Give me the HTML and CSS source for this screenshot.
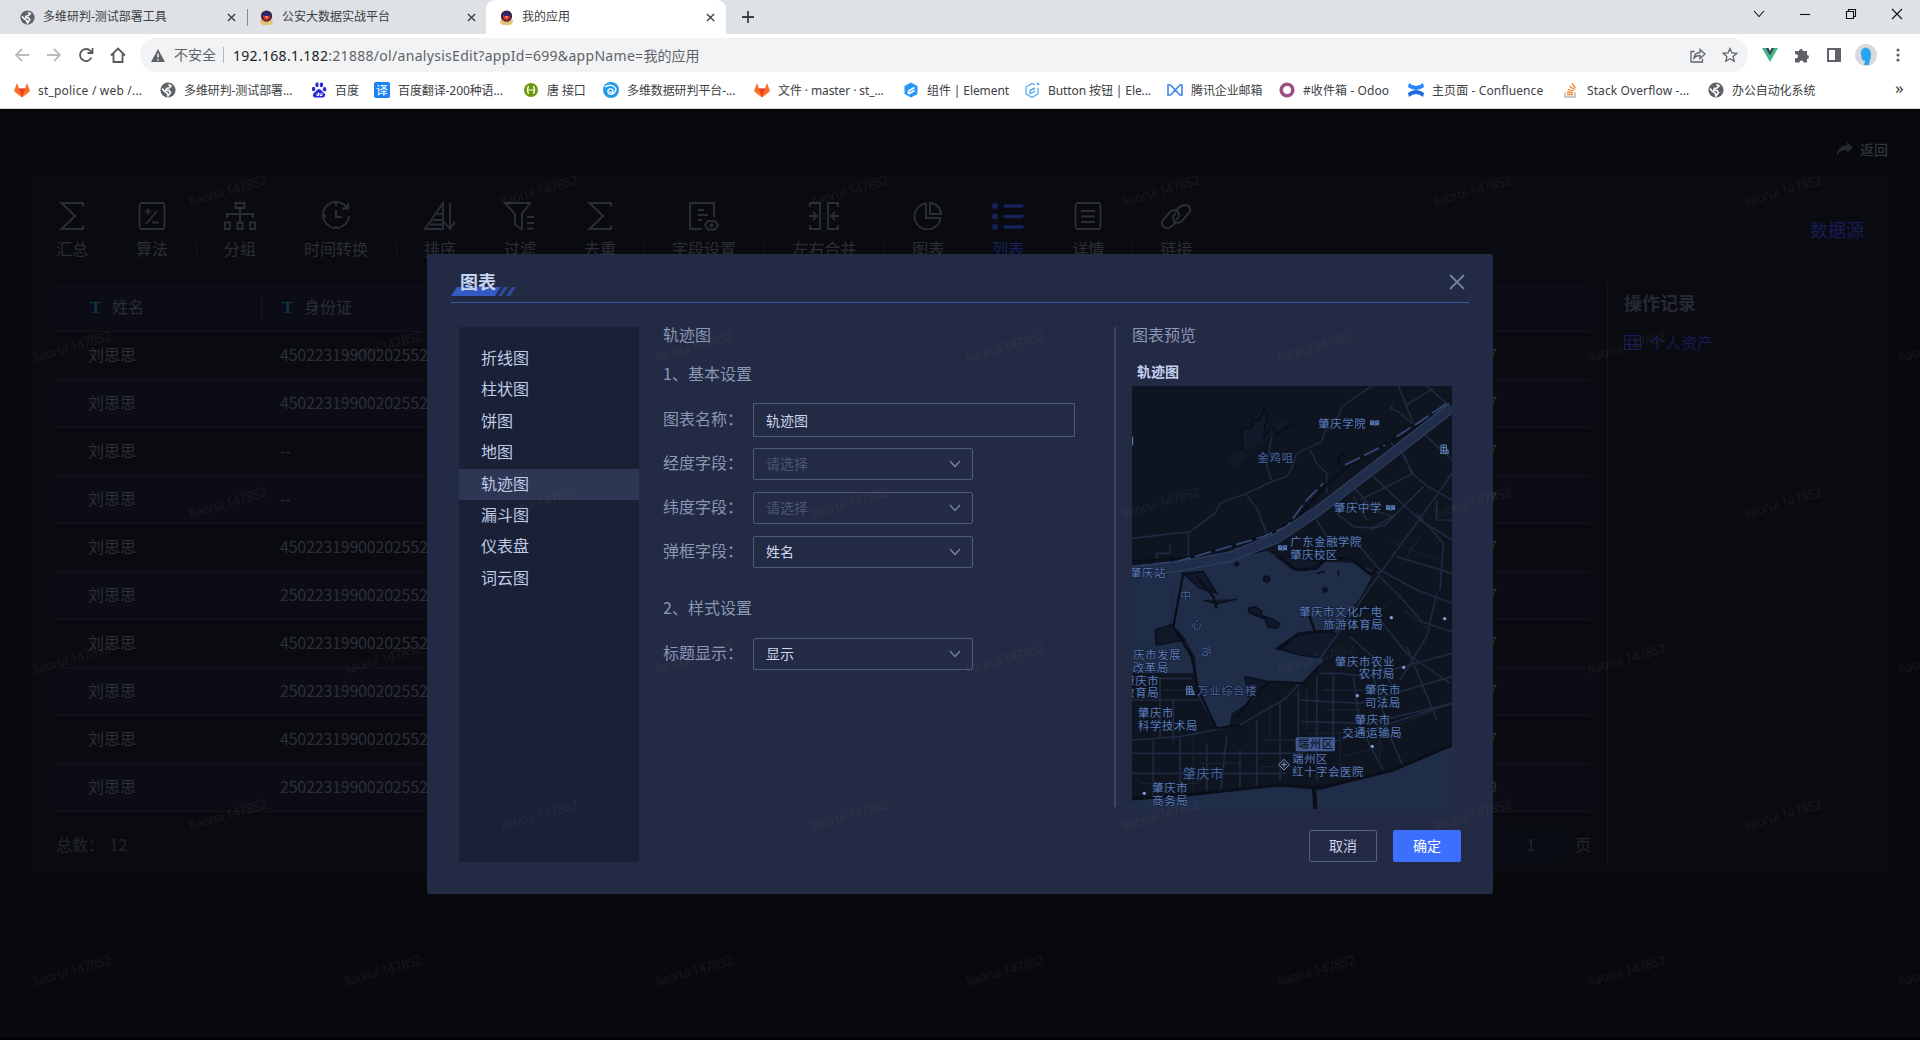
FILE: index.html
```html
<!DOCTYPE html>
<html lang="zh-CN">
<head>
<meta charset="utf-8">
<title>我的应用</title>
<link rel="stylesheet" href="styles.css">
</head>
<body>
<svg class="defs" width="0" height="0">
  <symbol id="globe" viewBox="0 0 16 16"><circle cx="8" cy="8" r="7.6" fill="#5f6368"/><path d="M8.500 2.500 11 4 9 6 6.500 6.500 6 8l3 .5 1.500 2L8 13.800 7 11 4 9 2.200 6.500" fill="none" stroke="#fff" stroke-width="1.600"/></symbol>
  <symbol id="police" viewBox="0 0 16 16"><path d="M2 9h12l1 4-3 3H4l-3-3z" fill="#e6bf77"/><circle cx="8" cy="6.500" r="6" fill="#3a2340"/><path d="M4 5.500h8L11 9.500l-3 2-3-2z" fill="#e02b32"/><path d="M5 4.500 8 2l3 2.500v2H5z" fill="#1f2d86"/><circle cx="8" cy="7.500" r="1.200" fill="#f3c95c"/></symbol>
  <symbol id="x" viewBox="0 0 10 10"><path d="M1 1l8 8M9 1 1 9" fill="none" stroke="currentColor" stroke-width="1.500"/></symbol>
  <symbol id="gitlab" viewBox="0 0 16 16"><path d="M0 9 3 1l2 5.500h6L13 1l3 8-8 6.500z" fill="#fc6d26"/><path d="M5 6.500h6L8 15.500z" fill="#e24329"/><path d="M0 9 8 15.500 3 12zM16 9 8 15.500 13 12z" fill="#fca326"/></symbol>
  <symbol id="caret" viewBox="0 0 12 8"><path d="M1 1l5 5.500L11 1" fill="none" stroke="currentColor" stroke-width="1.200"/></symbol>
  <symbol id="sum" viewBox="0 0 28 28"><path d="M25 4.500V1H3.500L17 14 3.500 27H25v-3.500"/></symbol>
  <symbol id="book" viewBox="0 0 28 20"><path d="M0 1h11l3 3 3-3h11v15H18l-4 3-4-3H0z" fill="#5575b0"/><path d="M14 5v13M7 3v5M21 3v5" stroke="#111b30" stroke-width="2"/></symbol>
  <symbol id="bldg" viewBox="0 0 28 30"><path d="M3 28V3h16v25M19 17h5v11M0 28h28M3 11h16M3 20h16M11 3v25" fill="none" stroke="#6384bd" stroke-width="3"/></symbol>
</svg>

<header class="browser">
  <div class="tabs">
    <div class="tab"><svg class="fav"><use href="#globe"/></svg><span>多维研判-测试部署工具</span><svg class="tab-x"><use href="#x"/></svg></div>
    <div class="tab ruled"><svg class="fav"><use href="#police"/></svg><span>公安大数据实战平台</span><svg class="tab-x"><use href="#x"/></svg></div>
    <div class="tab active"><svg class="fav"><use href="#police"/></svg><span>我的应用</span><svg class="tab-x"><use href="#x"/></svg></div>
    <svg class="plus" viewBox="0 0 12 12"><path d="M6 0v12M0 6h12" stroke="#3c4043" stroke-width="1.800"/></svg>
    <div class="win">
      <svg viewBox="0 0 12 12"><path d="M1 3l5 5.500L11 3"/></svg>
      <svg viewBox="0 0 12 12"><path d="M1 6.500h10"/></svg>
      <svg viewBox="0 0 12 12"><path d="M1.500 3.500h7v7h-7zM3.500 3.500v-2h7v7h-2"/></svg>
      <svg viewBox="0 0 12 12"><path d="M1 1l10 10M11 1 1 11"/></svg>
    </div>
  </div>
  <div class="nav">
    <div class="nav-icons">
      <svg viewBox="0 0 16 16" class="off"><path d="M15 8H2M8 2 2 8l6 6"/></svg>
      <svg viewBox="0 0 16 16" class="off"><path d="M1 8h13M8 2l6 6-6 6"/></svg>
      <svg viewBox="0 0 16 16"><path d="M13.500 10.500A6 6 0 1 1 12.500 4L14 5.500M14.500 1v5h-5"/></svg>
      <svg viewBox="0 0 16 16"><path d="M1 8.500 8 1.500l7 7M3.500 7v8h9V7"/></svg>
    </div>
    <div class="address">
      <svg class="warn" viewBox="0 0 14 13"><path d="M7 0l7 13H0z" fill="#5f6368"/><path d="M7 4.500v4M7 10v1.500" stroke="#fff" stroke-width="1.400"/></svg>
      <span class="unsafe">不安全</span>
      <span class="url"><b>192.168.1.182</b>:21888/ol/analysisEdit?appId=699&amp;appName=<i>我的应用</i></span>
      <svg class="share" viewBox="0 0 16 16"><path d="M4.500 4.500H1V15h11.500v-3M4 11c.5-4 3-5.500 6-5.500V2.500l5 4.500-5 4.500V8.500C7 8.500 5.500 9 4 11z"/></svg>
      <svg class="star" viewBox="0 0 16 16"><path d="M8 1.500 10 6l4.700.4-3.600 3.100 1.100 4.700L8 11.700l-4.200 2.500 1.100-4.700L1.300 6.400 6 6z"/></svg>
    </div>
    <div class="exts">
      <svg viewBox="0 0 16 16"><path d="M0 1h3.500L8 9l4.500-8H16L8 15z" fill="#41b883"/><path d="M3.500 1H6.500L8 4l1.500-3h3L8 9z" fill="#34495e"/></svg>
      <svg viewBox="0 0 16 16"><path d="M1 4h4a2 2 0 1 1 4 0h4v4a2 2 0 1 1 0 4v3.500H9.500a2 2 0 1 0-4 0H1V11a2 2 0 1 0 0-3.500z" fill="#5f6368"/></svg>
      <svg viewBox="0 0 16 16"><path d="M2 2h12v12H2z" fill="none" stroke="#5f6368" stroke-width="2"/><path d="M9 2h5v12H9z" fill="#5f6368"/></svg>
      <svg class="avatar" viewBox="0 0 22 22"><circle cx="11" cy="11" r="11" fill="#d8dadd"/><path d="M6 10C5 1 17 2 16 11c0 4-2 6-2 10H9l1-4-3-1z" fill="#29a6f0"/></svg>
      <svg viewBox="0 0 16 16"><g fill="#5f6368"><circle cx="8" cy="3" r="1.600"/><circle cx="8" cy="8" r="1.600"/><circle cx="8" cy="13" r="1.600"/></g></svg>
    </div>
  </div>
  <nav class="marks">
    <a class="wide"><svg><use href="#gitlab"/></svg>st_police / web /...</a>
    <a><svg><use href="#globe"/></svg>多维研判-测试部署...</a>
    <a><svg viewBox="0 0 16 16"><g fill="#2529d8"><ellipse cx="2.600" cy="7" rx="1.700" ry="2.200"/><ellipse cx="6" cy="2.800" rx="1.700" ry="2.500"/><ellipse cx="10.500" cy="2.800" rx="1.700" ry="2.500"/><ellipse cx="13.600" cy="7.200" rx="1.700" ry="2.200"/><path d="M8 7c2 0 3 2.500 5 4s1 4.500-1 4.500H4c-2 0-3-3-1-4.500S6 7 8 7z"/></g><path d="M6 11.500v2h1.500v-3M9 11v2.500h2V11" stroke="#fff" fill="none"/></svg>百度</a>
    <a><svg viewBox="0 0 16 16"><rect width="16" height="16" rx="2" fill="#1b82f2"/><text x="8" y="12.500" class="yi">译</text></svg>百度翻译-200种语...</a>
    <a><svg viewBox="0 0 16 16"><circle cx="8" cy="8" r="7" fill="#6a9a0b"/><path d="M5.500 4q-2 4 0 8M10.500 4q2 4 0 8M5 8h6" stroke="#fff" fill="none" stroke-width="1.200"/></svg>唐 接口</a>
    <a><svg viewBox="0 0 16 16"><circle cx="8" cy="8" r="8" fill="#1e9bea"/><path d="M2 5c4-3 9-2 11 2-1 6-7 7-8 3s5-4 5-1-3 2-3 0" stroke="#fff" fill="none" stroke-width="1.400"/></svg>多维数据研判平台-...</a>
    <a><svg><use href="#gitlab"/></svg>文件 · master · st_...</a>
    <a><svg viewBox="0 0 16 16"><path d="M8 .5 14.500 4v8L8 15.500 1.500 12V4z" fill="#2a96f5"/><path d="M11.500 5.500 5.500 9M11.500 8.500l-6 3.500M5.500 9v3" stroke="#fff" stroke-width="1.600" fill="none"/></svg>组件 | Element</a>
    <a><svg viewBox="0 0 16 16"><path d="M11 3 8 1.500 2 5v7l6 3.500 6-3.500V6" fill="none" stroke="#4ca3ef" stroke-width="1.200"/><path d="M11 6 6 8.500M11 9l-5 3M6 8.500V12" stroke="#4ca3ef" stroke-width="1.400" fill="none"/><circle cx="14" cy="2" r="1.300" fill="#4ca3ef"/></svg>Button 按钮 | Ele...</a>
    <a><svg viewBox="0 0 16 16"><path d="M1 3v10h2.500L13 3h2v10h-2L3.500 3z" fill="none" stroke="#3a87e5" stroke-width="1.600"/></svg>腾讯企业邮箱</a>
    <a><svg viewBox="0 0 16 16"><circle cx="8" cy="8" r="5.800" fill="none" stroke="#9b4f86" stroke-width="3.600"/></svg><span class="odoo">#收件箱 - Odoo</span></a>
    <a><svg viewBox="0 0 16 16"><path d="M1 1q7 6 14 0l1 4q-8 6-16 0z" fill="#2684ff"/><path d="M1 15q7-6 14 0l1-4q-8-6-16 0z" fill="#1868db"/></svg><span class="odoo">主页面 - Confluence</span></a>
    <a><svg viewBox="0 0 16 16"><path d="M2 10v5h10v-5" fill="none" stroke="#bcbbbb" stroke-width="1.500"/><path d="M4 12.500h6M4 10l6 .7M4.800 7.300 10.500 9M6.500 4.300l5 3.400M9 1.500l3.500 4.800" stroke="#f48024" stroke-width="1.300"/></svg><span class="odoo">Stack Overflow -...</span></a>
    <a><svg><use href="#globe"/></svg>办公自动化系统</a>
    <a class="more">»</a>
  </nav>
</header>

<main class="app">
  <div class="back"><svg viewBox="0 0 16 14"><path d="M10 0l6 5.500L10 11V8C5 8 2 9.500 0 14 0 7 4 3.500 10 3.200z" fill="currentColor"/></svg><span>返回</span></div>
  <section class="panel">
    <div class="tools">
      <div class="tool"><svg viewBox="0 0 28 28"><use href="#sum"/></svg>汇总</div>
      <div class="tool"><svg viewBox="0 0 28 28"><rect x="1.500" y="1" width="25" height="26" rx="2.500"/><path d="M7 9.500h6M10 6.500v6M19 9 8 22M14 20.500h7"/></svg>算法</div>
      <i class="rule"></i>
      <div class="tool"><svg class="w32" viewBox="-2 0 32 28"><path d="M9.500 1h9v5h-9zM14 6v6M1 16v-4h26v4M14 12v8M-1 20.500h5V27h-5zM11.500 20.500h5V27h-5zM24 20.500h5V27h-5z"/></svg>分组</div>
      <div class="tool"><svg viewBox="0 0 28 28"><path d="M25 6A13 13 0 1 0 27 14M20 6.500h6V1M14 8v7h6M14 1v3M14 24v3M1 14h3"/></svg>时间转换</div>
      <i class="rule"></i>
      <div class="tool"><svg class="w32" viewBox="-2 0 32 28"><path d="M17 27V1L-1 27zM11 12h6M7 18h10M4 22.500h13M24 1v26M18 20l6 7 5-7"/></svg>排序</div>
      <div class="tool"><svg class="w32" viewBox="-2 0 32 28"><path d="M-1 1h25l-8 11v15l-7-4V12zM21 15h7M21 21h7M21 26.500h7"/></svg>过滤</div>
      <div class="tool"><svg viewBox="0 0 28 28"><use href="#sum"/></svg>去重</div>
      <i class="rule"></i>
      <div class="tool"><svg class="w32" viewBox="-2 0 32 28"><path d="M24 15V1H0v26h12M8 8h6M8 13h10M8 18h4M18 19h7l3 4-3 4.500h-7L15 23z"/><circle cx="21.500" cy="23.300" r="1"/></svg>字段设置</div>
      <i class="rule"></i>
      <div class="tool"><svg class="w32" viewBox="-2 0 32 28"><path d="M0 5V1h10v26H0v-4M28 5V1H18v26h10v-4M-1 14h7M3 10l4 4-4 4M29 14h-7M25 10l-4 4 4 4"/></svg>左右合并</div>
      <i class="rule"></i>
      <div class="tool"><svg viewBox="0 0 28 28"><path d="M12 1.500A13 13 0 1 0 26.500 16H12zM16 1v11h11A11 11 0 0 0 16 1z"/></svg>图表</div>
      <div class="tool on"><svg class="w32" viewBox="-2 0 32 28"><path d="M11 4h17M11 14.500h17M11 25h17" stroke-width="3.400" stroke-linecap="round"/><g fill="currentColor" stroke="none"><circle cx="1" cy="4" r="3"/><circle cx="1" cy="14.500" r="3"/><circle cx="1" cy="25" r="3"/></g></svg>列表</div>
      <div class="tool"><svg viewBox="0 0 28 28"><rect x="1.500" y="1" width="25" height="26" rx="2.500"/><path d="M7 9h14M7 14.500h14M7 20h14"/></svg>详情</div>
      <i class="rule"></i>
      <div class="tool"><svg class="w32" viewBox="-2 0 32 28"><path d="M14 20c-3 3-5 6-9 6s-7-4-4-8l7-8c3-3 9-2 9 3 0 3-2 4-3 5M14 8c3-3 5-5 9-5s7 4 4 8l-7 8c-3 3-9 2-9-3 0-3 2-4 3-5"/></svg>链接</div>
      <div class="source">数据源</div>
    </div>
    <div class="content">
      <div class="left">
        <div class="table">
          <div class="row head"><div class="c1"><b>T</b>姓名</div><div class="c2"><b>T</b>身份证</div></div>
          <div class="row"><div class="c1">刘思思</div><div class="c2">450223199002025527</div><div class="c3">1990-02-07</div></div>
          <div class="row alt"><div class="c1">刘思思</div><div class="c2">450223199002025527</div><div class="c3">1990-02-07</div></div>
          <div class="row"><div class="c1">刘思思</div><div class="c2">--</div><div class="c3">1990-02-07</div></div>
          <div class="row alt"><div class="c1">刘思思</div><div class="c2">--</div><div class="c3">1990-02-07</div></div>
          <div class="row"><div class="c1">刘思思</div><div class="c2">450223199002025527</div><div class="c3">1990-02-07</div></div>
          <div class="row alt"><div class="c1">刘思思</div><div class="c2">250223199002025527</div><div class="c3">1990-02-07</div></div>
          <div class="row"><div class="c1">刘思思</div><div class="c2">450223199002025527</div><div class="c3">1990-02-07</div></div>
          <div class="row alt"><div class="c1">刘思思</div><div class="c2">250223199002025527</div><div class="c3">1990-02-07</div></div>
          <div class="row"><div class="c1">刘思思</div><div class="c2">450223199002025527</div><div class="c3">1990-02-07</div></div>
          <div class="row alt"><div class="c1">刘思思</div><div class="c2">250223199002025527</div><div class="c3">1990-02-09</div></div>
        </div>
        <div class="foot"><span class="total">总数： 12</span><span class="page">1</span><span>页</span></div>
      </div>
      <aside class="log">
        <h3>操作记录</h3>
        <div class="asset"><svg viewBox="0 0 16 14"><path d="M.5 .5h15v13H.5zM.5 4.500h15M.5 9h15M5.500 .5v13M10.500 .5v13" fill="none" stroke="currentColor"/></svg>个人资产</div>
      </aside>
    </div>
  </section>

  <div class="modal">
    <div class="m-head"><h2>图表</h2><svg class="slash" viewBox="0 0 65 9"><path d="M6 0h44l-6 9H0z" fill="#355ac4"/><path d="M53 0h4l-6 9h-4zM61 0h4l-6 9h-4z" fill="#2f4a9c"/></svg><svg class="m-x" viewBox="0 0 16 16"><path d="M1 1l14 14M15 1 1 15"/></svg></div>
    <div class="m-body">
      <ul class="menu"><li>折线图</li><li>柱状图</li><li>饼图</li><li>地图</li><li class="cur">轨迹图</li><li>漏斗图</li><li>仪表盘</li><li>词云图</li></ul>
      <div class="form">
        <p class="t1">轨迹图</p>
        <p class="t2">1、基本设置</p>
        <div class="f name"><label>图表名称：</label><div class="inp">轨迹图</div></div>
        <div class="f"><label>经度字段：</label><div class="sel ph">请选择<svg><use href="#caret"/></svg></div></div>
        <div class="f"><label>纬度字段：</label><div class="sel ph">请选择<svg><use href="#caret"/></svg></div></div>
        <div class="f"><label>弹框字段：</label><div class="sel">姓名<svg><use href="#caret"/></svg></div></div>
        <p class="t3">2、样式设置</p>
        <div class="f"><label>标题显示：</label><div class="sel">显示<svg><use href="#caret"/></svg></div></div>
      </div>
      <div class="preview">
        <p class="t1">图表预览</p>
        <p class="cap">轨迹图</p>
        <svg class="map" viewBox="36 18 960 1269">
          <path fill="#0e1420" d="M36 18h960v1269H36z"/>
          <g class="water">
            <path d="M36 580 180 555 300 545 440 512 475 530 520 568 565 570 610 545 700 548 755 590 720 655 690 690 640 780 600 860 545 915 440 905 400 960 335 1000 328 1040 290 1045 235 950 225 830 190 770 155 735 160 620 36 600z"/>
            <path d="M36 600h124l-5 130-50 25v35H36z"/>
            <path d="M36 790h70l85-10 30 60v40H36z"/>
            <path d="M36 1257 200 1245 480 1215 600 1225 820 1170 996 1095v192H36z"/>
          </g>
          <path fill="#111929" d="M370 150 430 85 450 130 510 125 470 155 430 190 370 215zM320 230l50-20 15 20-40 40z"/>
          <path fill="none" stroke="#090e18" stroke-width="6" d="M368 210l-4-60 30-10 6-20 18 2 14-36 10 20-12 60M440 120l30 40 55-30M450 150l-20 25"/>
          <g class="land">
            <path d="M470 805 520 770 600 755 650 760 610 835 540 825z"/><path d="M190 580l60-5 40 65-50-15zM385 685l20-5 20 14-2 12 40 14 17 12-8 12-27-2-10-25-45-18z"/><path d="M470 530l50 38 45 2 45-25-100-15zM105 750l50-15 40 45-85 15zM375 890l10 60 60-45z"/><circle cx="440" cy="597" r="9"/><circle cx="615" cy="630" r="6"/><circle cx="350" cy="553" r="5"/><path d="M590 580l25-5M655 570v20M250 660l40 12 60-15"/>
          </g>
          <g class="casing">
            <path d="M755 18 665 80 650 120 615 155 605 185 530 220 515 265 500 290 455 305 380 340 300 370 285 400 210 455 36 475"/>
            <path d="M380 345 410 385 440 460M205 455v85M110 540v-20h40v-25M455 300l-15-40 15-90M570 210l20 40 30 30v60M835 18 860 80 880 130M920 18l70 60M860 75l80-50M820 75q-20 10 15 20l40 35"/>
            <path d="M805 180l50 50 20 50 50 40 71 40M760 290l140 130 96 60M700 320l60 70 60 20M850 230l30 50-160 80M650 400l50 40q80 10 100-10l110-110M996 280 940 360 780 580 640 780 560 890 490 960 360 1035 180 1070 36 1080M590 420l30 50 100 30 60 70 110 60 106 40M620 470l100 20M700 350l40 70M910 160l86 80M950 360v60h46M830 530l166 50M780 580l-90-30M775 585l70 70 60 70 91 30M830 400l-80 50M890 400l80 90-10 140"/>
            <path d="M600 880 660 880 740 890 996 820M590 890V1200M535 930v260M480 970v230M410 1020v210M320 1070l-20 180M180 1075v160M100 1080v170M36 1120h500l460-150M36 1180h460M540 960l180 10 276-80M545 1025l200 5 251-60M640 880v200M700 890l20 150 70 130M780 720l80 100 130 90M690 770l80 70 60 100M760 890l50 180 40 90M860 800l90 220M950 640l-30 130-80 130M36 895h180M120 895v175M36 960h200M160 960v120M260 1090v150M360 1110v130"/>
          </g>
          <g class="grid"><path d="M610 930h120M620 990h100M560 1060h100M430 1080h150M420 1160h100M240 1150h130M60 1210h180M670 1130l110-30M820 1040l130-50M740 940l90-30M850 870l100-40M720 720l80-40M850 690l80 60M800 480l150 60M900 470l-60 90M700 850h120M130 930h90M60 990v70M220 1060v180M450 970v110M560 930v120M660 1050v150M780 1030v130"/></g>
          <g class="roads"><path d="M190 580 160 740 215 830 235 930 290 1045 360 1035"/><path d="M230 590l50 60 10 35M480 530l50 40 60-5 30-30 70 0 65 50 15-20M565 700l20 55M475 810l60-50 110-10M350 1010l40-50 60-55 100 5 50-55M36 545l165-12 250-70 85-55 90-100 70-60 170-95 130-65M660 260l-5-30 20-10"/><path d="M36 1257 200 1245 480 1215 600 1225 820 1170 996 1095" stroke-width="9"/><path d="M582 1220l4 67" stroke-width="13"/></g>
          <path d="M36 560 170 545 430 470 500 440 560 360 610 310M675 255l120-60M830 170l70-45 80-55" fill="none" stroke="#31456e" stroke-width="6" stroke-dasharray="50 14"/>
          <path class="hw1" d="M36 575 170 560 330 530 470 475 590 395 780 250 996 82"/>
          <path class="hw2" d="M36 575 170 560 330 530 470 475 590 395 780 250 996 82"/>
          <g class="names">
            <text x="595" y="143" textLength="142">肇庆学院</text><text x="412" y="246" textLength="107" class="dim">金鸡咀</text><text x="642" y="396" textLength="142">肇庆中学</text><text x="511" y="499" textLength="213">广东金融学院</text><text x="511" y="538" textLength="140">肇庆校区</text><text x="30" y="592" textLength="106">肇庆站</text>
            <text x="180" y="660" class="dim">中</text><text x="212" y="746" class="dim">心</text><text x="240" y="829" class="dim">湖</text>
            <text x="538" y="708" textLength="248">肇庆市文化广电</text><text x="610" y="746" textLength="178">旅游体育局</text>
            <text x="40" y="838" textLength="142">庆市发展</text><text x="38" y="877" textLength="107">改革局</text><text x="10" y="914" textLength="106">肇庆市</text><text x="10" y="952" textLength="106">教育局</text><text x="232" y="945" textLength="178" class="dim">万业综合楼</text>
            <text x="54" y="1012" textLength="106">肇庆市</text><text x="54" y="1051" textLength="178">科学技术局</text>
            <text x="645" y="857" textLength="178">肇庆市农业</text><text x="716" y="895" textLength="107">农村局</text><text x="735" y="942" textLength="106">肇庆市</text><text x="735" y="980" textLength="106">司法局</text><text x="704" y="1032" textLength="106">肇庆市</text><text x="667" y="1071" textLength="178">交通运输局</text>
            <text x="517" y="1148" textLength="105">端州区</text><text x="517" y="1187" textLength="213">红十字会医院</text><text x="188" y="1195" textLength="122" class="big">肇庆市</text><text x="97" y="1237" textLength="106">肇庆市</text><text x="97" y="1276" textLength="106">商务局</text>
          </g>
          <rect x="527" y="1072" width="118" height="42" rx="4" fill="#415b92"/><text x="533" y="1104" textLength="106" class="badge">端州区</text>
          <g fill="#7f9fd4"><circle cx="814" cy="713" r="5"/><circle cx="974" cy="716" r="5"/><circle cx="851" cy="862" r="5"/><circle cx="712" cy="947" r="5"/><circle cx="757" cy="1099" r="5"/><circle cx="73" cy="1240" r="5"/></g>
          <path d="M492 1138l16 16-16 16-16-16zM492 1146v16M484 1154h16" fill="#111b2b" stroke="#7a96c2" stroke-width="3"/>
          <use href="#book" x="750" y="120" width="28" height="20"/><use href="#book" x="798" y="374" width="28" height="20"/><use href="#book" x="474" y="495" width="28" height="20"/><use href="#bldg" x="960" y="192" width="28" height="30"/><use href="#bldg" x="197" y="916" width="28" height="30"/><path d="M38 170v26" stroke="#6384bd" stroke-width="3"/>
        </svg>
      </div>
    </div>
    <div class="m-foot"><button>取消</button><button class="ok">确定</button></div>
  </div>

  <svg class="stamp" width="1920" height="931">
    <defs><pattern id="wm" width="311" height="312" patternUnits="userSpaceOnUse" x="0" y="0">
      <text transform="translate(191 97) rotate(-16)" textLength="80">liaorui 147852</text>
      <text transform="translate(35 253) rotate(-16)" textLength="80">liaorui 147852</text>
    </pattern></defs>
    <rect width="1920" height="931" fill="url(#wm)"/>
  </svg>
</main>
</body>
</html>
```
FILE: styles.css
```css
* { box-sizing: border-box; }
body { margin: 0; width: 1920px; height: 1040px; overflow: hidden; background: #000; font-family: "Noto Sans", "Noto Sans CJK SC", sans-serif; }
p, h2, h3, ul { margin: 0; padding: 0; list-style: none; }
.defs { position: absolute; }

/* browser chrome */
.browser { height: 109px; background: #fff; border-bottom: 1px solid #cfd6d9; color: #3c4043; font-size: 12px; }
.tabs { height: 34px; background: #dee1e6; display: flex; align-items: stretch; }
.tab { width: 239px; padding: 0 8px 0 20px; display: flex; align-items: center; line-height: 34px; }
.tab:first-child { width: 247px; padding-right: 11px; }
.tab.ruled { background: linear-gradient(#868a90, #868a90) 0 9px / 1px 17px no-repeat; padding-left: 12px; padding-right: 10px; }
.tab.active { background: #fff; border-radius: 9px 9px 0 0; width: 240px; padding-left: 13px; padding-right: 11px; }
.fav { width: 15px; height: 15px; margin-right: 8px; }
.tab span { flex: 1; white-space: nowrap; }
.tab-x { width: 9px; height: 9px; color: #3c4043; }
.plus { width: 12px; height: 12px; align-self: center; margin-left: 16px; }
.win { margin-left: auto; display: flex; gap: 34px; padding: 8px 17px 0 0; }
.win svg { width: 12px; height: 12px; fill: none; stroke: #111; stroke-width: 1.1; }
.nav { height: 38px; display: flex; align-items: center; padding-top: 4px; }
.nav-icons { width: 140px; padding-left: 14px; display: flex; gap: 16px; }
.nav-icons svg { width: 16px; height: 16px; fill: none; stroke: #55595e; stroke-width: 1.8; }
.nav-icons .off { stroke: #b9bcc0; }
.address { width: 1608px; height: 34px; border-radius: 17px; background: #f1f3f4; display: flex; align-items: center; font-size: 14px; color: #5f6368; padding: 0 10px 0 11px; }
.warn { width: 14px; height: 13px; margin-right: 9px; }
.unsafe { padding-right: 7px; border-right: 1px solid #b5b8bc; line-height: 16px; }
.url { flex: 1; padding-left: 9px; letter-spacing: 0.3px; }
.url b { font-weight: 400; color: #202124; }
.url i { font-style: normal; letter-spacing: 0; }
.share, .star { width: 16px; height: 16px; fill: none; stroke: #5f6368; stroke-width: 1.3; margin-left: 16px; }
.exts { display: flex; align-items: center; gap: 16px; padding-left: 14px; }
.exts svg { width: 16px; height: 16px; }
.exts .avatar { width: 22px; height: 22px; margin: 0 -3px; }
.marks { display: grid; grid-template-columns: 146px 151px 63px 149px 80px 151px 149px 121px 143px 112px 129px 155px 145px 187px 30px; padding-left: 14px; height: 36px; align-items: center; letter-spacing: -0.1px; }
.marks a { display: flex; align-items: center; gap: 8px; white-space: nowrap; }
.marks .wide { letter-spacing: 0.2px; }
.odoo { letter-spacing: 0.1px; }
.marks svg { width: 16px; height: 16px; flex: none; }
.yi { font-size: 12px; fill: #fff; text-anchor: middle; }
.marks .more { font-size: 17px; line-height: 20px; padding-bottom: 4px; }

/* application page */
.app { position: relative; height: 929px; background: #07090d; padding: 30px 32px 0; color: #2c2e37; font-size: 16px; font-family: "Noto Sans CJK SC", sans-serif; overflow: hidden; }
.back { display: flex; justify-content: flex-end; align-items: center; gap: 7px; height: 20px; line-height: 20px; font-size: 14px; font-weight: 500; color: #30333e; }
.back svg { width: 16px; height: 14px; color: #262932; }
.panel { margin-top: 17px; height: 702px; background: #0a0b10; padding-bottom: 15px; }
.tools { height: 107px; display: flex; align-items: flex-start; }
.tool { padding: 26px 24px 0; display: flex; flex-direction: column; align-items: center; line-height: 24px; white-space: nowrap; }
.tool svg { width: 28px; height: 28px; margin-bottom: 6px; fill: none; stroke: currentColor; stroke-width: 1.9; overflow: visible; }
.tool .w32 { width: 32px; }
.tool.on { color: #16225a; }
.rule { width: 8px; height: 16px; margin-top: 65px; background: linear-gradient(#15171d, #15171d) 4px 0 / 1px 16px no-repeat; }
.source { margin: 40px 24px 0 auto; font-size: 18px; line-height: 26px; color: #171d55; }
.content { display: flex; height: 580px; }
.left { width: 1576px; padding: 1px 16px 0 24px; border-right: 1px solid #14161c; }
.row { display: flex; height: 48px; line-height: 45px; border-bottom: 1px solid #14151b; }
.alt, .head { background: #0b0c15; }
.head b { font: bold 17px "Liberation Serif", serif; color: #123642; width: 13px; display: inline-block; margin-right: 9px; }
.row.head { line-height: 44px; }
.c1 { width: 206px; padding-left: 32px; }
.head .c1 { padding-left: 34px; background: linear-gradient(#15171e, #15171e) 205px 12px / 1px 24px no-repeat; }
.c2 { width: 400px; padding-left: 18px; letter-spacing: -0.2px; }
.head .c2 { padding-left: 20px; letter-spacing: 0; }
.c3 { flex: 1; text-align: right; padding-right: 94px; }
.foot { display: flex; align-items: center; height: 32px; line-height: 28px; margin-top: 18px; color: #23252e; }
.foot span { height: 32px; }
.total { word-spacing: 2px; }
.foot .page { width: 64px; line-height: 27px; text-align: center; background: #090c13; border: 1px solid #0b1018; margin: 0 12px 0 auto; }
.log { padding: 6px 0 0 16px; }
.log h3 { font-size: 18px; line-height: 26px; color: #262833; }
.asset { display: flex; align-items: center; gap: 8px; margin-top: 15px; line-height: 24px; color: #161b50; }
.asset svg { width: 17px; height: 15px; }

/* chart dialog */
.modal { position: absolute; left: 427px; top: 145px; width: 1066px; height: 640px; background: #232a43; border-radius: 2px; padding: 0 24px; color: #8b96b8; }
.m-head { height: 49px; border-bottom: 1px solid #3c56a3; padding: 13px 0 0 9px; display: flex; position: relative; }
.m-head h2 { font-size: 18px; line-height: 28px; color: #c5d4f0; z-index: 1; }
.slash { position: absolute; left: 0; top: 33px; width: 65px; height: 9px; }
.m-x { margin: 7px 4px 0 auto; width: 16px; height: 16px; stroke: #7480a1; stroke-width: 1.8; }
.m-body { display: flex; height: 527px; padding: 24px 0 0 8px; }
.menu { width: 180px; height: 535px; background: #1a2035; padding-top: 16px; color: #bfcbe6; }
.menu li { height: 31.4px; line-height: 29px; padding-left: 22px; }
.menu .cur { background: #2d3652; }
.form { width: 477px; height: 480px; padding-left: 24px; border-right: 2px solid #3c455d; }
.t1 { line-height: 14px; height: 18px; }
.t2 { line-height: 21px; height: 24px; margin-top: 18px; }
.f { display: flex; align-items: center; height: 32px; margin-bottom: 12px; }
.f.name { height: 34px; margin: 16px 0 11px; }
.f label { width: 90px; white-space: nowrap; line-height: 28px; height: 32px; }
.inp, .sel { border: 1px solid #4f5a7b; font-size: 14px; color: #ccd6ec; padding-left: 12px; height: 32px; line-height: 28px; width: 220px; border-radius: 2px; display: flex; justify-content: space-between; padding-right: 11px; }
.inp { width: 322px; height: 34px; line-height: 32px; border-radius: 0; }
.ph { color: #4a5576; }
.sel svg { width: 12px; height: 8px; margin-top: 11px; color: #7c88aa; }
.t3 { line-height: 22px; height: 24px; margin: 28px 0 18px; }
.preview { padding-left: 16px; width: 336px; }
.cap { font-size: 14px; font-weight: 700; line-height: 17px; height: 20px; color: #c2d0ed; margin: 18px 0 3px 5px; }
.map { width: 320px; height: 423px; display: block; }
.water { fill: #202d49; }
.land { fill: #10182a; stroke: #0a1020; stroke-width: 5; }
.casing { fill: none; stroke: #1e2a40; stroke-width: 5; }
.grid { fill: none; stroke: #18222f; stroke-width: 4; }
.roads { fill: none; stroke: #090e19; stroke-width: 7; }
.hw1 { fill: none; stroke: #31415f; stroke-width: 32; }
.hw2 { fill: none; stroke: #202d4b; stroke-width: 26; }
.names text { font-size: 34px; fill: #5c7dba; stroke: #0d1424; stroke-width: 3px; paint-order: stroke; }
.names .dim { fill: #48649c; }
.names .big { font-size: 39px; fill: #47659f; }
.badge { font-size: 34px; font-weight: 500; fill: #101829; }
.m-foot { display: flex; justify-content: flex-end; gap: 16px; padding: 0 8px; }
.m-foot button { width: 68px; height: 32px; padding: 0 0 2px; border: 1px solid #56617f; border-radius: 2px; background: none; color: #ccd5ea; font: 14px/28px "Noto Sans CJK SC", sans-serif; }
.m-foot .ok { background: #3d6fff; border-color: #3d6fff; color: #fff; }

/* watermark laid over everything in the page */
.stamp { position: absolute; left: 0; top: 0; pointer-events: none; }
.stamp text { font: 13px "Noto Sans", sans-serif; fill: #6a6d76; fill-opacity: 0.13; }
```
